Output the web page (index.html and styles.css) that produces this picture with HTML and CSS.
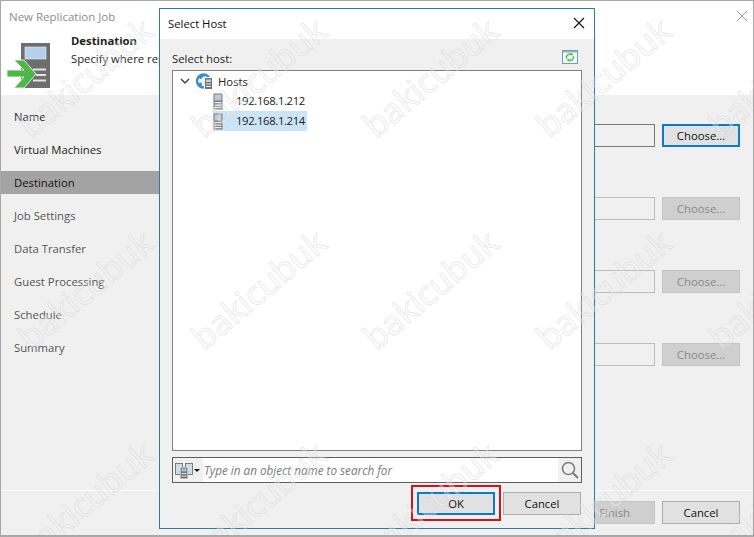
FILE: index.html
```html
<!DOCTYPE html>
<html lang="en">
<head>
<meta charset="utf-8">
<title>New Replication Job</title>
<link rel="stylesheet" href="styles.css">
</head>
<body>
<div class="window">
  <header class="win-header">
    <div class="win-title">New Replication Job</div>
    <svg class="win-close" width="12" height="12" viewBox="0 0 12 12"><path d="M1 1l10 10M11 1L1 11" stroke="#a0a0a0" stroke-width="1" fill="none"/></svg>
    <div class="head-row">
      <svg class="dest-icon" width="44" height="46" viewBox="0 0 44 46">
        <rect x="14" y="0" width="29" height="45" fill="#6e6e6e"/>
        <rect x="18" y="4" width="21" height="12" fill="#b5d0ee" stroke="#e8eef4" stroke-width="0.600"/>
        <path d="M26 25.500h13v2H26zM29 31h10v2H29zM26 36.500h13v2H26z" fill="#e4e4e4"/>
        <path d="M7 17h10l12 14-12 14H7l10-11H0v-7h17z" fill="#4db848" stroke="#fff" stroke-width="0.800"/>
      </svg>
      <div class="head-text">
        <div class="head-title">Destination</div>
        <div class="head-sub">Specify where replicas are created</div>
      </div>
    </div>
  </header>
  <div class="win-main">
    <nav class="nav">
      <div class="nav-item done">Name</div>
      <div class="nav-item done">Virtual Machines</div>
      <div class="nav-item current">Destination</div>
      <div class="nav-item">Job Settings</div>
      <div class="nav-item">Data Transfer</div>
      <div class="nav-item">Guest Processing</div>
      <div class="nav-item">Schedule</div>
      <div class="nav-item">Summary</div>
    </nav>
    <div class="form">
      <div class="form-row"><div class="field"></div><button class="btn focus">Choose...</button></div>
      <div class="form-row"><div class="field off"></div><button class="btn off">Choose...</button></div>
      <div class="form-row"><div class="field off"></div><button class="btn off">Choose...</button></div>
      <div class="form-row"><div class="field off"></div><button class="btn off">Choose...</button></div>
    </div>
  </div>
  <footer class="win-footer">
    <button class="btn off finish">Finish</button>
    <button class="btn">Cancel</button>
  </footer>

  <section class="dialog">
    <div class="dlg-title">
      <span>Select Host</span>
      <svg width="12" height="12" viewBox="0 0 12 12"><path d="M1 1l10 10M11 1L1 11" stroke="#111" stroke-width="1.100" fill="none"/></svg>
    </div>
    <div class="dlg-body">
      <div class="dlg-label-row">
        <span>Select host:</span>
        <svg class="refresh" width="16" height="14" viewBox="0 0 16 14">
          <rect x="0.500" y="0.500" width="15" height="13" fill="#f2f7f5" stroke="#6f9fb0"/>
          <rect x="1" y="1" width="14" height="1.500" fill="#8fb4c4"/>
          <path d="M4.500 8.500a3.500 3.500 0 0 1 5-4M11.500 6a3.500 3.500 0 0 1-5 4" stroke="#58c058" stroke-width="1.500" fill="none"/>
          <path d="M9 2.500l2.500 2-2.800 1.200zM7 11.800l-2.500-2 2.800-1.200z" fill="#58c058"/>
        </svg>
      </div>
      <div class="tree">
        <div class="tree-row root">
          <svg class="chev" width="10" height="7" viewBox="0 0 10 7"><path d="M1 1l4 4 4-4" stroke="#444" stroke-width="1.500" fill="none"/></svg>
          <svg width="18" height="18" viewBox="0 0 18 18">
            <circle cx="8.500" cy="9" r="6.500" fill="#eaf3fa" stroke="#3d8ac4" stroke-width="2.400"/>
            <path d="M4 5c2-2 5-3 7-2-1 2-3 1-4 3S4 7 4 5zM4 11c2-1 3 0 3 2l-1 2c-1-1-2-2-2-4z" fill="#3d8ac4"/>
            <rect x="9" y="5" width="8" height="12" fill="#fff"/>
            <rect x="10" y="6" width="7" height="11" fill="#707070"/>
            <path d="M11 7.500h5V10h-5z" fill="#c5cfd8"/>
            <path d="M11 11.500h5v1h-5zM11 14h5v1h-5z" fill="#eee"/>
          </svg>
          <span>Hosts</span>
        </div>
        <div class="tree-row host">
          <svg width="10" height="17" viewBox="0 0 10 17"><rect x="0.500" y="0.500" width="9" height="16" fill="#7a7a7a"/><rect x="1.500" y="1.500" width="7" height="6" fill="#bccad4"/><path d="M1.500 9h7v1.200h-7zM1.500 11.500h7v1.200h-7zM1.500 14h7v1.200h-7z" fill="#f0f0f0"/></svg>
          <span class="host-name">192.168.1.212</span>
        </div>
        <div class="tree-row host sel">
          <svg width="10" height="17" viewBox="0 0 10 17"><rect x="0.500" y="0.500" width="9" height="16" fill="#7a7a7a"/><rect x="1.500" y="1.500" width="7" height="6" fill="#bccad4"/><path d="M1.500 9h7v1.200h-7zM1.500 11.500h7v1.200h-7zM1.500 14h7v1.200h-7z" fill="#f0f0f0"/></svg>
          <span class="host-name">192.168.1.214</span>
        </div>
      </div>
      <div class="search">
        <div class="search-kind">
          <svg width="18" height="17" viewBox="0 0 18 17">
            <rect x="0.500" y="1.500" width="7" height="11" fill="#cfdfe9" stroke="#7d7d7d"/>
            <rect x="10.500" y="1.500" width="7" height="11" fill="#cfdfe9" stroke="#7d7d7d"/>
            <rect x="5" y="5" width="8" height="12" fill="#fff"/>
            <rect x="5.500" y="5.500" width="7" height="11" fill="#6f6f6f"/>
            <rect x="6.500" y="6.500" width="5" height="3" fill="#a9c4d8"/>
            <path d="M6.500 11h5v1h-5zM6.500 13.500h5v1h-5z" fill="#eee"/>
          </svg>
          <span class="caret"></span>
        </div>
        <div class="search-text">Type in an object name to search for</div>
        <div class="search-go">
          <svg width="18" height="18" viewBox="0 0 18 18"><circle cx="7.500" cy="7.500" r="6" stroke="#7c7c7c" stroke-width="1.600" fill="none"/><path d="M12 12l5 5" stroke="#7c7c7c" stroke-width="2.200"/></svg>
        </div>
      </div>
      <div class="dlg-buttons">
        <div class="highlight"></div>
        <button class="btn focus">OK</button>
        <button class="btn">Cancel</button>
      </div>
    </div>
  </section>

  <div class="watermarks" aria-hidden="true">
    <span>bakicubuk</span><span>bakicubuk</span><span>bakicubuk</span><span>bakicubuk</span><span>bakicubuk</span>
    <span>bakicubuk</span><span>bakicubuk</span><span>bakicubuk</span><span>bakicubuk</span><span>bakicubuk</span>
    <span>bakicubuk</span><span>bakicubuk</span><span>bakicubuk</span><span>bakicubuk</span><span>bakicubuk</span>
  </div>
</div>
</body>
</html>
```

FILE: styles.css
```css
* { box-sizing: border-box; }
html, body { margin: 0; padding: 0; }
body {
  width: 754px;
  height: 537px;
  overflow: hidden;
  font-family: "Open Sans", "Noto Sans", sans-serif;
  font-size: 11.300px;
  color: #222;
}
.window {
  position: relative;
  width: 754px;
  height: 537px;
  overflow: hidden;
  background: #f0f0f0;
  border: 1px solid #a8a8a8;
  border-bottom-width: 2px;
  display: flex;
  flex-direction: column;
}
.win-header {
  position: relative;
  height: 94px;
  background: #fff;
  flex: none;
}
.win-title {
  color: #8c8c8c;
  font-size: 11.500px;
  padding: 7px 0 0 8px;
  line-height: 17px;
}
.win-close { position: absolute; right: 5px; top: 9px; }
.head-row {
  display: flex;
  align-items: flex-start;
  gap: 20px;
  padding: 18px 0 0 6px;
}
.head-text { line-height: 18px; white-space: nowrap; margin-top: -11px; }
.head-title { font-weight: 700; }
.win-main { flex: 1; display: flex; min-height: 0; }
.nav {
  width: 158px;
  flex: none;
  padding-top: 10px;
  display: flex;
  flex-direction: column;
  gap: 10px;
}
.nav-item {
  height: 23px;
  line-height: 23px;
  padding-left: 13px;
  color: #555;
}
.nav-item.done { color: #222; }
.nav-item.current { background: #a3a3a3; color: #111; }
.form {
  flex: 1;
  padding: 29px 13px 0 20px;
  display: flex;
  flex-direction: column;
  gap: 50px;
}
.form-row { display: flex; gap: 7px; height: 23px; }
.field { flex: 1; background: #f0f0f0; border: 1px solid #7a7a7a; }
.field.off { border-color: #bcbcbc; }
.btn {
  width: 78px;
  height: 23px;
  padding: 0;
  font: inherit;
  color: #111;
  background: #e1e1e1;
  border: 1px solid #adadad;
}
.btn.focus { border: 2px solid #0f78c8; }
.btn.off { background: #cfcfcf; border-color: #c4c4c4; color: #8a8a8a; }
.win-footer {
  height: 45px;
  flex: none;
  border-top: 1px solid #fbfbfb;
  padding: 10px 13px 0 0;
  display: flex;
  justify-content: flex-end;
  gap: 7px;
}
.finish { width: 84px; text-align: right; padding-right: 24px; }

.dialog {
  position: absolute;
  left: 158px;
  top: 7px;
  width: 436px;
  height: 521px;
  background: #f0f0f0;
  border: 1px solid #2a7ab0;
  display: flex;
  flex-direction: column;
}
.dlg-title {
  height: 30px;
  flex: none;
  background: #fff;
  display: flex;
  align-items: center;
  justify-content: space-between;
  padding: 0 9px 2px 8px;
  color: #111;
}
.dlg-body {
  flex: 1;
  position: relative;
  padding: 0 12px;
  display: flex;
  flex-direction: column;
}
.dlg-label-row {
  height: 31px;
  display: flex;
  align-items: flex-end;
  justify-content: space-between;
  padding-bottom: 4px;
  color: #222;
}
.refresh { margin-right: 4px; margin-bottom: 2px; }
.tree {
  height: 381px;
  background: #fff;
  border: 1px solid #7f7f7f;
  padding-top: 0;
}
.tree-row {
  height: 20px;
  display: flex;
  align-items: center;
  color: #222;
  width: max-content;
}
.root { padding-left: 7px; gap: 5px; }
.host { margin-left: 40px; padding-right: 2px; gap: 13px; }
.host.sel { background: #cce4f7; }
.host-name { line-height: 20px; letter-spacing: -0.350px; }
.search {
  margin-top: 6px;
  height: 26px;
  background: #fff;
  border: 1px solid #5f5f5f;
  display: flex;
  align-items: stretch;
}
.search-kind {
  width: 30px;
  background: #f0f0f0;
  display: flex;
  align-items: center;
  padding-left: 2px;
  gap: 1px;
}
.caret {
  width: 0;
  height: 0;
  border-left: 3px solid transparent;
  border-right: 3px solid transparent;
  border-top: 3px solid #111;
}
.search-text {
  flex: 1;
  font-size: 11.700px;
  font-style: italic;
  color: #7a7a7a;
  line-height: 24px;
  padding-left: 1px;
}
.search-go {
  width: 23px;
  background: #f0f0f0;
  display: flex;
  align-items: center;
  justify-content: center;
}
.dlg-buttons {
  position: relative;
  display: flex;
  justify-content: flex-end;
  gap: 8px;
  margin-top: 9px;
  margin-right: 1px;
}
.highlight {
  position: absolute;
  right: 80px;
  top: -7px;
  width: 90px;
  height: 36px;
  border: 2px solid #d2141a;
}
.watermarks {
  position: absolute;
  left: -2px;
  top: -30px;
  display: grid;
  grid-template-columns: repeat(5, 172.500px);
  grid-auto-rows: 212px;
  pointer-events: none;
}
.watermarks span {
  display: flex;
  align-items: center;
  justify-content: center;
  font-family: "Open Sans", sans-serif;
  font-size: 34px;
  color: rgba(255, 255, 255, 0.3);
  -webkit-text-stroke: 1px rgba(205, 205, 205, 0.42);
  transform: rotate(-40deg);
}
```
